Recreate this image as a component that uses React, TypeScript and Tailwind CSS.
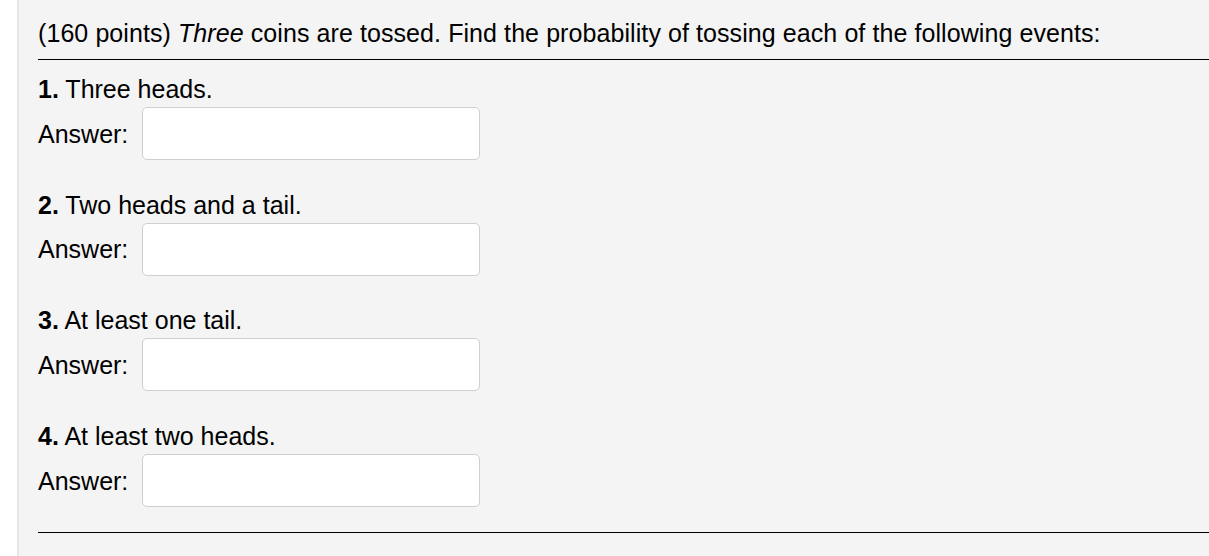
export default function App() {
  const questions = [
    { n: '1.', text: 'Three heads.' },
    { n: '2.', text: 'Two heads and a tail.' },
    { n: '3.', text: 'At least one tail.' },
    { n: '4.', text: 'At least two heads.' },
  ]

  return (
    <div className="min-h-[556px] bg-white font-['Liberation_Sans',Arial,sans-serif] text-[25px] text-black">
      <div className="ml-[17px] min-h-[556px] border-l-2 border-[#e6e6e6] bg-[#f4f4f4] pl-[19px] pt-[19px]">
        <p className="leading-[28px] tracking-[0.08px]">
          (160 points) <em>Three</em> coins are tossed. Find the probability of tossing each of the following
          events:
        </p>
        <div className="mt-[12px] h-px bg-black" />

        <div className="mt-[15px] flex flex-col gap-[30.7px]">
          {questions.map((q) => (
            <div key={q.n} className="flex flex-col gap-[4px]">
              <p className="leading-[28px]">
                <b>{q.n}</b> {q.text}
              </p>
              <div className="flex items-center gap-[14px]">
                <label className="leading-[28px]">Answer:</label>
                <input
                  type="text"
                  className="h-[53px] w-[338px] rounded-[5px] border border-[#cfcfcf] bg-white px-3 text-[20px] outline-none"
                />
              </div>
            </div>
          ))}
        </div>

        <div className="mt-[25px] h-px bg-black" />
      </div>
    </div>
  )
}
